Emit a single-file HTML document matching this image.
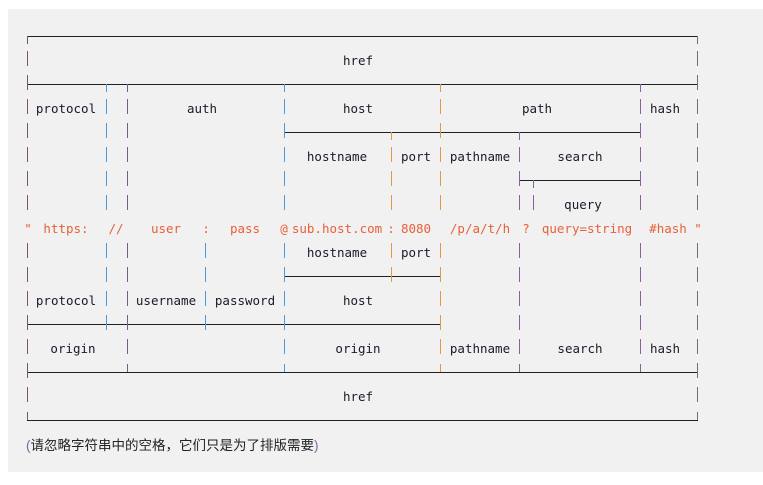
<!DOCTYPE html>
<html><head><meta charset="utf-8"><style>
html,body{margin:0;padding:0;background:#fff;}
#p{position:absolute;left:8px;top:9px;width:755px;height:463px;background:#f1f1f1;}
#d{position:absolute;left:0;top:1px;width:763px;height:484px;font-family:"DejaVu Sans Mono","Liberation Mono",monospace;font-size:12.5px;color:#1a1a2a;}
.t{position:absolute;transform:translate(-50%,-50%);white-space:pre;line-height:14px;}
.o{color:#e8603a;}
.h{position:absolute;height:1px;background:#222;}
.v{position:absolute;width:1px;}
#cap{position:absolute;left:26px;top:434px;font-family:"Liberation Sans","Noto Sans CJK SC",sans-serif;font-size:13.5px;color:#222;white-space:pre;}
</style></head><body>
<div id="p"></div>
<div id="d">
<div class="t" style="left:358px;top:60px">href</div>
<div class="t" style="left:66px;top:108px">protocol</div>
<div class="t" style="left:202px;top:108px">auth</div>
<div class="t" style="left:358px;top:108px">host</div>
<div class="t" style="left:537px;top:108px">path</div>
<div class="t" style="left:665px;top:108px">hash</div>
<div class="t" style="left:337px;top:156px">hostname</div>
<div class="t" style="left:416px;top:156px">port</div>
<div class="t" style="left:480px;top:156px">pathname</div>
<div class="t" style="left:580px;top:156px">search</div>
<div class="t" style="left:583px;top:204px">query</div>
<div class="t o" style="left:28px;top:228px">"</div>
<div class="t o" style="left:66px;top:228px">https:</div>
<div class="t o" style="left:116px;top:228px">//</div>
<div class="t o" style="left:166px;top:228px">user</div>
<div class="t o" style="left:206px;top:228px">:</div>
<div class="t o" style="left:245px;top:228px">pass</div>
<div class="t o" style="left:284px;top:228px">@</div>
<div class="t o" style="left:337px;top:228px">sub.host.com</div>
<div class="t o" style="left:391px;top:228px">:</div>
<div class="t o" style="left:416px;top:228px">8080</div>
<div class="t o" style="left:480px;top:228px">/p/a/t/h</div>
<div class="t o" style="left:526px;top:228px">?</div>
<div class="t o" style="left:587px;top:228px">query=string</div>
<div class="t o" style="left:668px;top:228px">#hash</div>
<div class="t o" style="left:698px;top:228px">"</div>
<div class="t" style="left:337px;top:252px">hostname</div>
<div class="t" style="left:416px;top:252px">port</div>
<div class="t" style="left:66px;top:300px">protocol</div>
<div class="t" style="left:166px;top:300px">username</div>
<div class="t" style="left:245px;top:300px">password</div>
<div class="t" style="left:358px;top:300px">host</div>
<div class="t" style="left:73px;top:348px">origin</div>
<div class="t" style="left:358px;top:348px">origin</div>
<div class="t" style="left:480px;top:348px">pathname</div>
<div class="t" style="left:580px;top:348px">search</div>
<div class="t" style="left:665px;top:348px">hash</div>
<div class="t" style="left:358px;top:396px">href</div>
</div>
<div id="l" style="position:absolute;left:0;top:0">
<div class="h" style="left:27px;width:671px;top:36px"></div>
<div class="h" style="left:27px;width:671px;top:84px"></div>
<div class="h" style="left:284px;width:357px;top:132px"></div>
<div class="h" style="left:519px;width:122px;top:180px"></div>
<div class="h" style="left:284px;width:157px;top:276px"></div>
<div class="h" style="left:27px;width:414px;top:324px"></div>
<div class="h" style="left:27px;width:671px;top:372px"></div>
<div class="h" style="left:27px;width:671px;top:420px"></div>
</div>
<div id="cap"><span style="color:#8a5fa0">(</span>请忽略字符串中的空格，它们只是为了排版需要<span style="color:#8a5fa0">)</span></div>
<script>
var C={27:'#7a5858',106:'#4a9ad8',127:'#7a5a8a',205:'#4a9ad8',284:'#4a9ad8',391:'#e09a40',440:'#e09a40',519:'#8a5fa0',533:'#8a5fa0',640:'#8a5fa0',697:'#7a6a7a'};
var R={
36:[27,697],60:[27,697],84:[27,106,127,284,440,640,697],108:[27,106,127,284,440,640,697],
132:[27,106,127,284,391,440,519,640,697],156:[27,106,127,284,391,440,519,640,697],
180:[27,106,127,284,391,440,519,533,640,697],204:[27,106,127,284,391,440,519,533,640,697],
252:[27,106,127,205,284,391,440,519,640,697],276:[27,106,127,205,284,391,440,519,640,697],
300:[27,106,127,205,284,440,519,640,697],324:[27,106,127,205,284,440,519,640,697],
348:[27,127,284,440,519,640,697],372:[27,697],396:[27,697],420:[27,697]};
var d=document.getElementById('l'),h='';
for(var y in R){y=+y;R[y].forEach(function(x){
 var t=y-9,hh=15;
 if(y==36){t=36;hh=8;}
 if(y==420){t=412;hh=8;}
 if(y==84&&x!=27&&x!=697){t=84;hh=8;}
 if(y==132&&(x==391||x==519)){t=132;hh=8;}
 if(y==180&&x==533){t=180;hh=8;}
 h+='<div class="v" style="left:'+x+'px;top:'+t+'px;height:'+hh+'px;background:'+C[x]+'"></div>';
});}
[127,284,440,519,640].forEach(function(x){h+='<div class="v" style="left:'+x+'px;top:364px;height:8px;background:'+C[x]+'"></div>';});
d.insertAdjacentHTML('beforeend',h);
</script>
</body></html>
